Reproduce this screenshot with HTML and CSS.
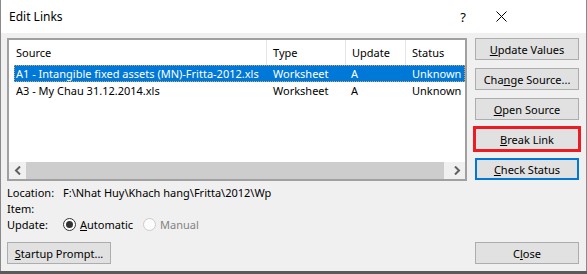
FILE: index.html
```html
<!DOCTYPE html>
<html lang="en">

<head>
    <meta charset="UTF-8">
    <title>Edit Links</title>
    <link rel="stylesheet" href="styles.css">
</head>

<body>
    <div class="dialog">
        <div class="titlebar">
            <span class="title">Edit Links</span>
            <span class="help">?</span>
            <svg class="close-x" width="11" height="11" viewBox="0 0 11 11">
                <path d="M0.5 0.5 L10.5 10.5 M10.5 0.5 L0.5 10.5" stroke="#000" stroke-width="1" fill="none" />
            </svg>
        </div>

        <div class="content">
            <div class="main">
                <div class="list">
                    <div class="list-inner">
                        <div class="list-head">
                            <div class="col c-source">Source</div>
                            <div class="col c-type">Type</div>
                            <div class="col c-update">Update</div>
                            <div class="col c-status">Status</div>
                        </div>
                        <div class="list-body">
                            <div class="row selected">
                                <div class="col c-source">A1 - Intangible fixed assets (MN)-Fritta-2012.xls</div>
                                <div class="col c-type">Worksheet</div>
                                <div class="col c-update">A</div>
                                <div class="col c-status">Unknown</div>
                            </div>
                            <div class="row">
                                <div class="col c-source">A3 - My Chau 31.12.2014.xls</div>
                                <div class="col c-type">Worksheet</div>
                                <div class="col c-update">A</div>
                                <div class="col c-status">Unknown</div>
                            </div>
                        </div>
                        <div class="hscroll">
                            <div class="arrow">
                                <svg width="8" height="9" viewBox="0 0 8 9">
                                    <path d="M6 0.5 L2 4.5 L6 8.5" stroke="#606060" stroke-width="2" fill="none" />
                                </svg>
                            </div>
                            <div class="thumb"></div>
                            <div class="arrow">
                                <svg width="8" height="9" viewBox="0 0 8 9">
                                    <path d="M2 0.5 L6 4.5 L2 8.5" stroke="#606060" stroke-width="2" fill="none" />
                                </svg>
                            </div>
                        </div>
                    </div>
                </div>

                <div class="buttons">
                    <button class="btn"><u>U</u>pdate Values</button>
                    <button class="btn">Cha<u>n</u>ge Source...</button>
                    <button class="btn"><u>O</u>pen Source</button>
                    <button class="btn marked"><u>B</u>reak Link</button>
                    <button class="btn default"><u>C</u>heck Status</button>
                </div>
            </div>

            <div class="info">
                <div class="info-row">
                    <span class="label">Location:</span>
                    <span>F:\Nhat Huy\Khach hang\Fritta\2012\Wp</span>
                </div>
                <div class="info-row">
                    <span class="label">Item:</span>
                </div>
                <div class="info-row">
                    <span class="label">Update:</span>
                    <span class="radio checked"></span>
                    <span class="radio-text"><u>A</u>utomatic</span>
                    <span class="radio disabled"></span>
                    <span class="radio-text muted">Manual</span>
                </div>
            </div>

            <div class="footer">
                <button class="btn"><u>S</u>tartup Prompt...</button>
                <button class="btn">C<u>l</u>ose</button>
            </div>
        </div>
    </div>
</body>

</html>
```

FILE: styles.css
```css
html {
    background: #5a5a5a;
}

body {
    margin: 0;
    padding: 0;
    font-family: 'Noto Sans', 'Liberation Sans', sans-serif;
    font-size: 11px;
    color: #000;
}

.dialog {
    width: 585px;
    height: 271px;
    background: #f0f0f0;
    border-left: 1px solid #8a8a8a;
    border-right: 1px solid #8a8a8a;
    display: flex;
    flex-direction: column;
}

.titlebar {
    height: 33px;
    background: #fff;
    display: flex;
    align-items: center;
    padding-left: 8px;
    flex-shrink: 0;
    font-size: 12px;
}

.title {
    flex: 1;
}

.help {
    font-size: 13px;
    margin-right: 30px;
}

.close-x {
    margin-right: 79px;
}

.content {
    padding: 5px 7px 0 6px;
    display: flex;
    flex-direction: column;
}

.main {
    display: flex;
    gap: 8px;
}

.list {
    width: 456px;
    height: 139px;
    border: 2px solid #a0a0a0;
    background: #fff;
}

.list-inner {
    height: 100%;
    display: flex;
    flex-direction: column;
    overflow: hidden;
}

.list-head {
    display: flex;
    height: 25px;
    align-items: stretch;
    flex-shrink: 0;
}

.list-head .col {
    display: flex;
    align-items: center;
    border-right: 1px solid #e5e5e5;
}

.list-head .c-source {
    width: 250px;
    padding-left: 7px;
}

.list-head .c-type {
    width: 72px;
    padding-left: 6px;
}

.list-head .c-update {
    width: 53px;
    padding-left: 6px;
}

.list-head .c-status {
    flex: 1;
    padding-left: 6px;
    border-right: none;
}

.list-body {
    flex: 1;
}

.row {
    display: flex;
    height: 17px;
    line-height: 17px;
    margin-left: 5px;
    white-space: nowrap;
}

.row .col {
    box-sizing: border-box;
}

.row .c-source {
    width: 253px;
    padding-left: 2px;
}

.row .c-type {
    width: 78px;
    padding-left: 6px;
}

.row .c-update {
    width: 60px;
    padding-left: 6px;
}

.row .c-status {
    flex: 1;
    padding-left: 7px;
    overflow: hidden;
}

.row.selected {
    background: #0078d7;
    color: #fff;
    outline: 1px dotted #c9a86a;
    outline-offset: -1px;
}

.hscroll {
    height: 17px;
    display: flex;
    background: #f0f0f0;
    flex-shrink: 0;
}

.arrow {
    width: 17px;
    display: flex;
    align-items: center;
    justify-content: center;
}

.thumb {
    flex: 1;
    background: #cdcdcd;
    margin-right: 4px;
}

.buttons {
    display: flex;
    flex-direction: column;
    gap: 8px;
}

.btn {
    font-family: inherit;
    font-size: 11px;
    width: 104px;
    height: 22px;
    background: #e1e1e1;
    border: 1px solid #adadad;
    padding: 0;
    color: #000;
}

.btn.marked {
    outline: 3px solid #ed1c24;
    outline-offset: -1px;
}

.btn.default {
    border: 2px solid #0078d7;
}

.info {
    margin-top: 3px;
    display: flex;
    flex-direction: column;
}

.info-row {
    height: 16px;
    display: flex;
    align-items: center;
}

.label {
    width: 56px;
}

.radio {
    width: 11px;
    height: 11px;
    border-radius: 50%;
    border: 1px solid #333;
    background: #fff;
    margin-right: 4px;
    display: flex;
    align-items: center;
    justify-content: center;
}

.radio.checked::after {
    content: "";
    width: 7px;
    height: 7px;
    border-radius: 50%;
    background: #333;
}

.radio.disabled {
    border-color: #cccccc;
    background: #fcfcfc;
}

.radio-text {
    margin-right: 10px;
}

.muted {
    color: #838383;
}

.footer {
    margin-top: 10px;
    display: flex;
    justify-content: space-between;
}
```
